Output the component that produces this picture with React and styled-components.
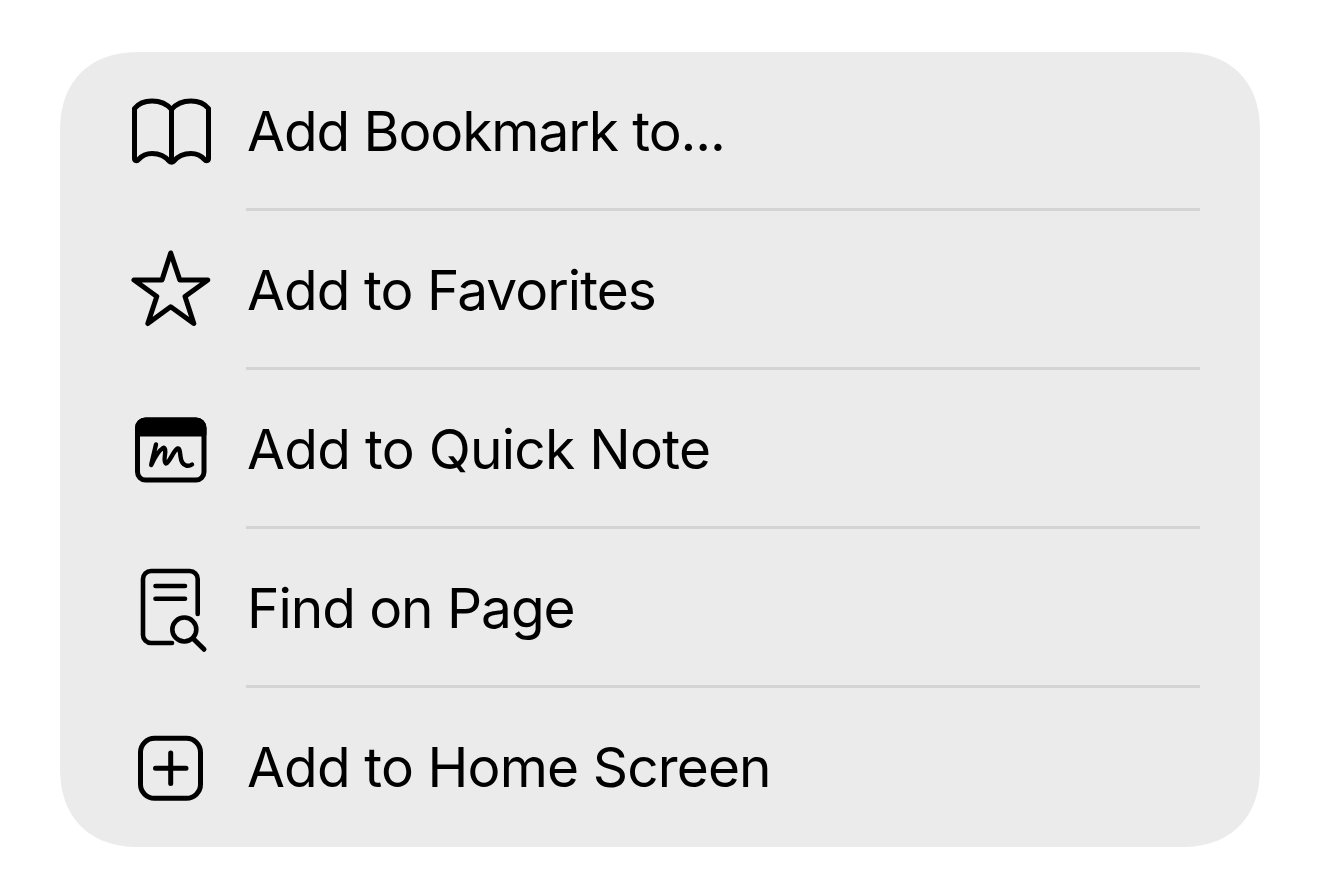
import React from 'react';
import styled, { createGlobalStyle } from 'styled-components';

const GlobalStyle = createGlobalStyle`
  html, body {
    margin: 0;
    background: #fff;
  }
`;

const Page = styled.div`
  width: 1320px;
  height: 894px;
  box-sizing: border-box;
  padding: 52px 60px 0;
`;

const Menu = styled.ul`
  list-style: none;
  margin: 0;
  padding: 0 60px 0 71px;
  background: #ebebeb;
  border-radius: 80px;
  corner-shape: superellipse(1.2);
  font-family: Inter, 'Liberation Sans', sans-serif;
  color: #000;
`;

const Row = styled.li`
  display: flex;
  height: 159px;
  gap: 35px;
`;

const IconSlot = styled.div`
  flex: none;
  width: 80px;
  height: 156px;
  display: flex;
  align-items: center;
`;

const Label = styled.div`
  flex: 1;
  display: flex;
  align-items: center;
  padding: 2px 0 0 1px;
  font-size: 55px;
  letter-spacing: ${({ $tracking }) => $tracking}px;
  border-bottom: ${({ $last }) => ($last ? 'none' : '3px solid #d4d4d4')};
  padding-bottom: ${({ $last }) => ($last ? '3px' : '0')};
`;

const Icon = styled.svg.attrs({
  width: 80,
  height: 80,
  viewBox: '0 0 80 80',
  fill: 'none',
  stroke: '#000',
  strokeLinecap: 'round',
  strokeLinejoin: 'round',
})`
  display: block;
  overflow: visible;
`;

const BookIcon = () => (
  <Icon strokeWidth="5">
    <path d="M40.5 19.5C36 14 29.5 11 21 11 13 11 7.5 13.5 3.5 18.5V68.5C3.5 71 6 71.5 7.5 69.5 11 65.5 15.5 63.5 21 63.5 28.5 63.5 34.5 66.5 38.5 71.5 39.5 72.5 41.5 72.5 42.5 71.5 46.5 66.5 52.5 63.5 60 63.5 65.5 63.5 70 65.5 73.5 69.5 75 71.5 77.5 71 77.5 68.5V18.5C73.5 13.5 68 11 60 11 51.5 11 45 14 40.5 19.5Z" />
    <path d="M40.5 19.5V71" />
  </Icon>
);

const StarIcon = () => (
  <Icon strokeWidth="5">
    <path d="M39.7 4 48.8 31H76.8L54 47.5 62.8 74.5 39.7 57.7 16.8 74.5 25.8 47.5 3 31H31Z" />
  </Icon>
);

const NoteIcon = () => (
  <Icon>
    <rect x="6.5" y="12" width="66.5" height="60" rx="8" strokeWidth="5" />
    <path d="M6.5 20a8 8 0 0 1 8-8H65a8 8 0 0 1 8 8v6H6.5Z" fill="#000" strokeWidth="5" />
    <path
      d="M25 36.5C23.5 43 21.5 51 20.2 57 23.5 50 28 42.5 32 40 34.5 39 34.5 43 34 46.5 33.5 50 33 54.5 35 55.5 38.5 54.5 42.5 42.5 46.5 40.5 49 40 49 45 49.5 48.5 50 53 52 56.5 55 57.5 57 58 59.5 57.5 61 56.5"
      strokeWidth="4.4"
    />
  </Icon>
);

const FindIcon = () => (
  <Icon strokeWidth="4.6">
    <path d="M66.7 47V12a8 8 0 0 0-8-8H20a8 8 0 0 0-8 8V68a8 8 0 0 0 8 8H41" />
    <path d="M24.5 19H54M24.5 31.7H54" />
    <circle cx="53.3" cy="62.5" r="12" />
    <path d="M62 71.5 73 82.3" strokeWidth="5" />
  </Icon>
);

const HomeIcon = () => (
  <Icon strokeWidth="5">
    <rect x="9.5" y="12.3" width="60" height="60" rx="14" />
    <path d="M24.5 42.3H55M39.7 27V57.5" />
  </Icon>
);

const items = [
  { label: 'Add Bookmark to...', tracking: -1.07, Glyph: BookIcon },
  { label: 'Add to Favorites', tracking: -0.95, Glyph: StarIcon },
  { label: 'Add to Quick Note', tracking: -0.72, Glyph: NoteIcon },
  { label: 'Find on Page', tracking: -1.05, Glyph: FindIcon },
  { label: 'Add to Home Screen', tracking: -0.87, Glyph: HomeIcon },
];

const App = () => (
  <>
    <GlobalStyle />
    <Page>
      <Menu>
        {items.map(({ label, tracking, Glyph }, i) => (
          <Row key={label}>
            <IconSlot>
              <Glyph />
            </IconSlot>
            <Label $last={i === items.length - 1} $tracking={tracking}>
              {label}
            </Label>
          </Row>
        ))}
      </Menu>
    </Page>
  </>
);

export default App;
